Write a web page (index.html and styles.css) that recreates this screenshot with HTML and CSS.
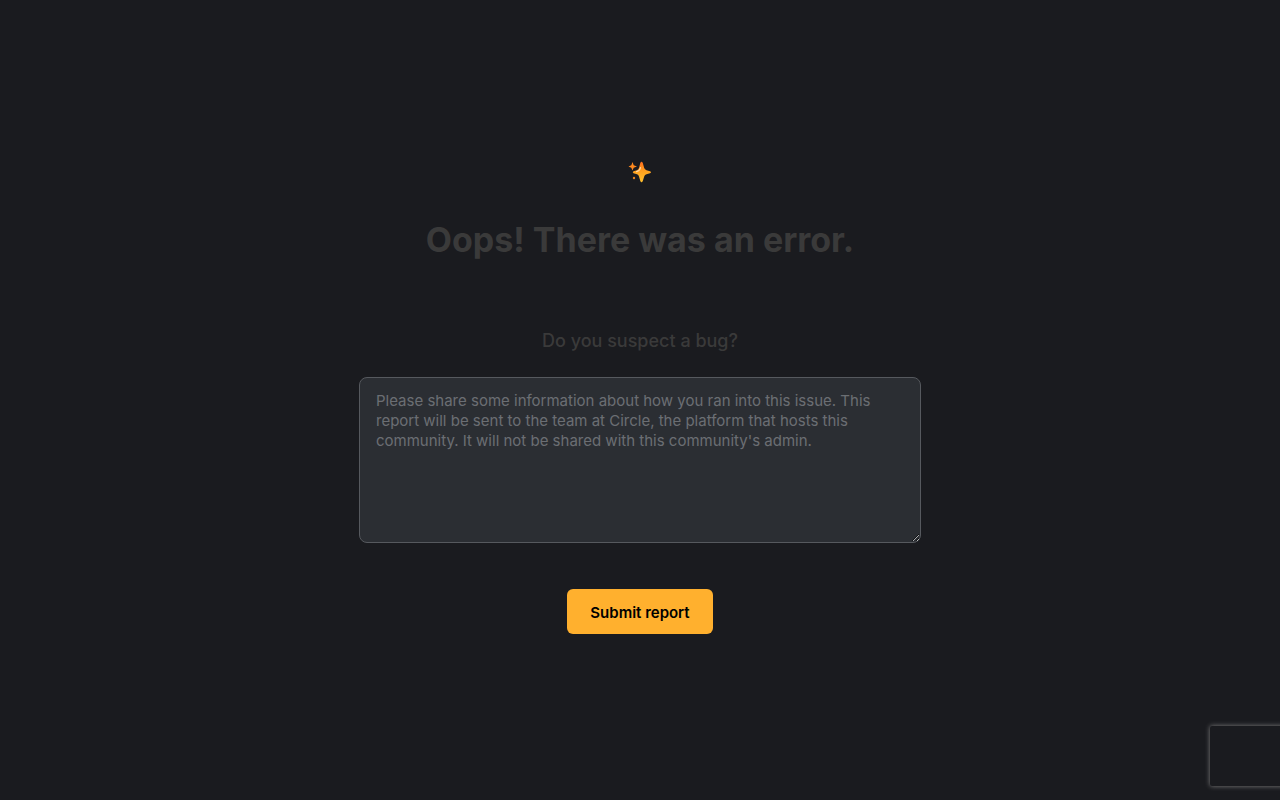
FILE: index.html
```html
<!DOCTYPE html>
<html lang="en">
<head>
<meta charset="utf-8">
<meta name="viewport" content="width=device-width, initial-scale=1">
<title>Error</title>
<link rel="stylesheet" href="styles.css">
</head>
<body>
<main class="error-page">
<svg class="sparkle" viewBox="0 0 24 24" aria-hidden="true">
<defs><linearGradient id="glow" x1="0" y1="0" x2="0" y2="1"><stop offset="0" stop-color="#ff6d1c"/><stop offset="0.45" stop-color="#ffa01e"/><stop offset="1" stop-color="#ffc02e"/></linearGradient></defs>
<path fill="url(#glow)" d="M12.300 3Q13.500 0.500 14.800 3L16.200 8Q16.700 9.600 18.500 10.300L22 11.300Q24 12.200 22 13.200L18.500 14.200Q16.700 14.800 16.200 16.500L14.800 21Q13.500 23.500 12.300 21L11 16.500Q10.500 14.800 9 14.200L5.500 13.200Q4 12.200 5.500 11.300L9 10.300Q10.500 9.600 11 8Z"/>
<path fill="none" stroke="#ffd9a8" stroke-width="1.200" stroke-linecap="round" d="M12.500 7.500Q12 10.800 8.500 11.700"/>
<path fill="#ff8a20" d="M4.500 2L5.700 5.300L9 6.500L5.700 7.700L4.500 10.500L3.300 7.700L.5 6.500L3.300 5.300Z"/>
<circle cx="6" cy="18" r="1.200" fill="#e58420"/>
</svg>
<h1 class="title">Oops! There was an error.</h1>
<form class="report">
<label class="question" for="details">Do you suspect a bug?</label>
<textarea class="details" id="details" placeholder="Please share some information about how you ran into this issue. This report will be sent to the team at Circle, the platform that hosts this community. It will not be shared with this community's admin."></textarea>
<button class="submit" type="button">Submit report</button>
</form>
</main>
<aside class="captcha" aria-hidden="true"></aside>
</body>
</html>
```
FILE: styles.css
```css
* {
  box-sizing: border-box;
}

body {
  margin: 0;
  min-height: 100vh;
  display: flex;
  flex-direction: column;
  background: #1a1b1f;
  color: #3a3a3a;
  font-family: Inter, sans-serif;
}

.error-page {
  flex: 1;
  display: flex;
  flex-direction: column;
  align-items: center;
  justify-content: center;
  padding: 0 24px 6px;
}

.sparkle {
  width: 24px;
  height: 24px;
  margin-bottom: 36px;
}

.title {
  margin: 0 0 67px;
  font-size: 34px;
  line-height: 40px;
  font-weight: 700;
  text-align: center;
}

.report {
  width: 100%;
  max-width: 562px;
  display: flex;
  flex-direction: column;
  align-items: center;
}

.question {
  margin-bottom: 22px;
  font-size: 18px;
  line-height: 28px;
  font-weight: 500;
}

.details {
  width: 100%;
  height: 166px;
  margin: 0 0 46px;
  padding: 13px 16px;
  border: 1px solid #56595e;
  border-radius: 8px;
  background: #2b2e33;
  color: #fff;
  font: 15px/20px Inter, sans-serif;
  resize: both;
}

.details::placeholder {
  color: #6b6e73;
}

.submit {
  height: 45px;
  padding: 2px 23px 0;
  border: 0;
  border-radius: 6px;
  background: #ffb02e;
  color: #000;
  font: 600 15px/20px Inter, sans-serif;
}

.captcha {
  position: fixed;
  right: -186px;
  bottom: 14px;
  width: 256px;
  height: 60px;
  border-radius: 2px;
  box-shadow: 0 0 5px gray;
}
```
